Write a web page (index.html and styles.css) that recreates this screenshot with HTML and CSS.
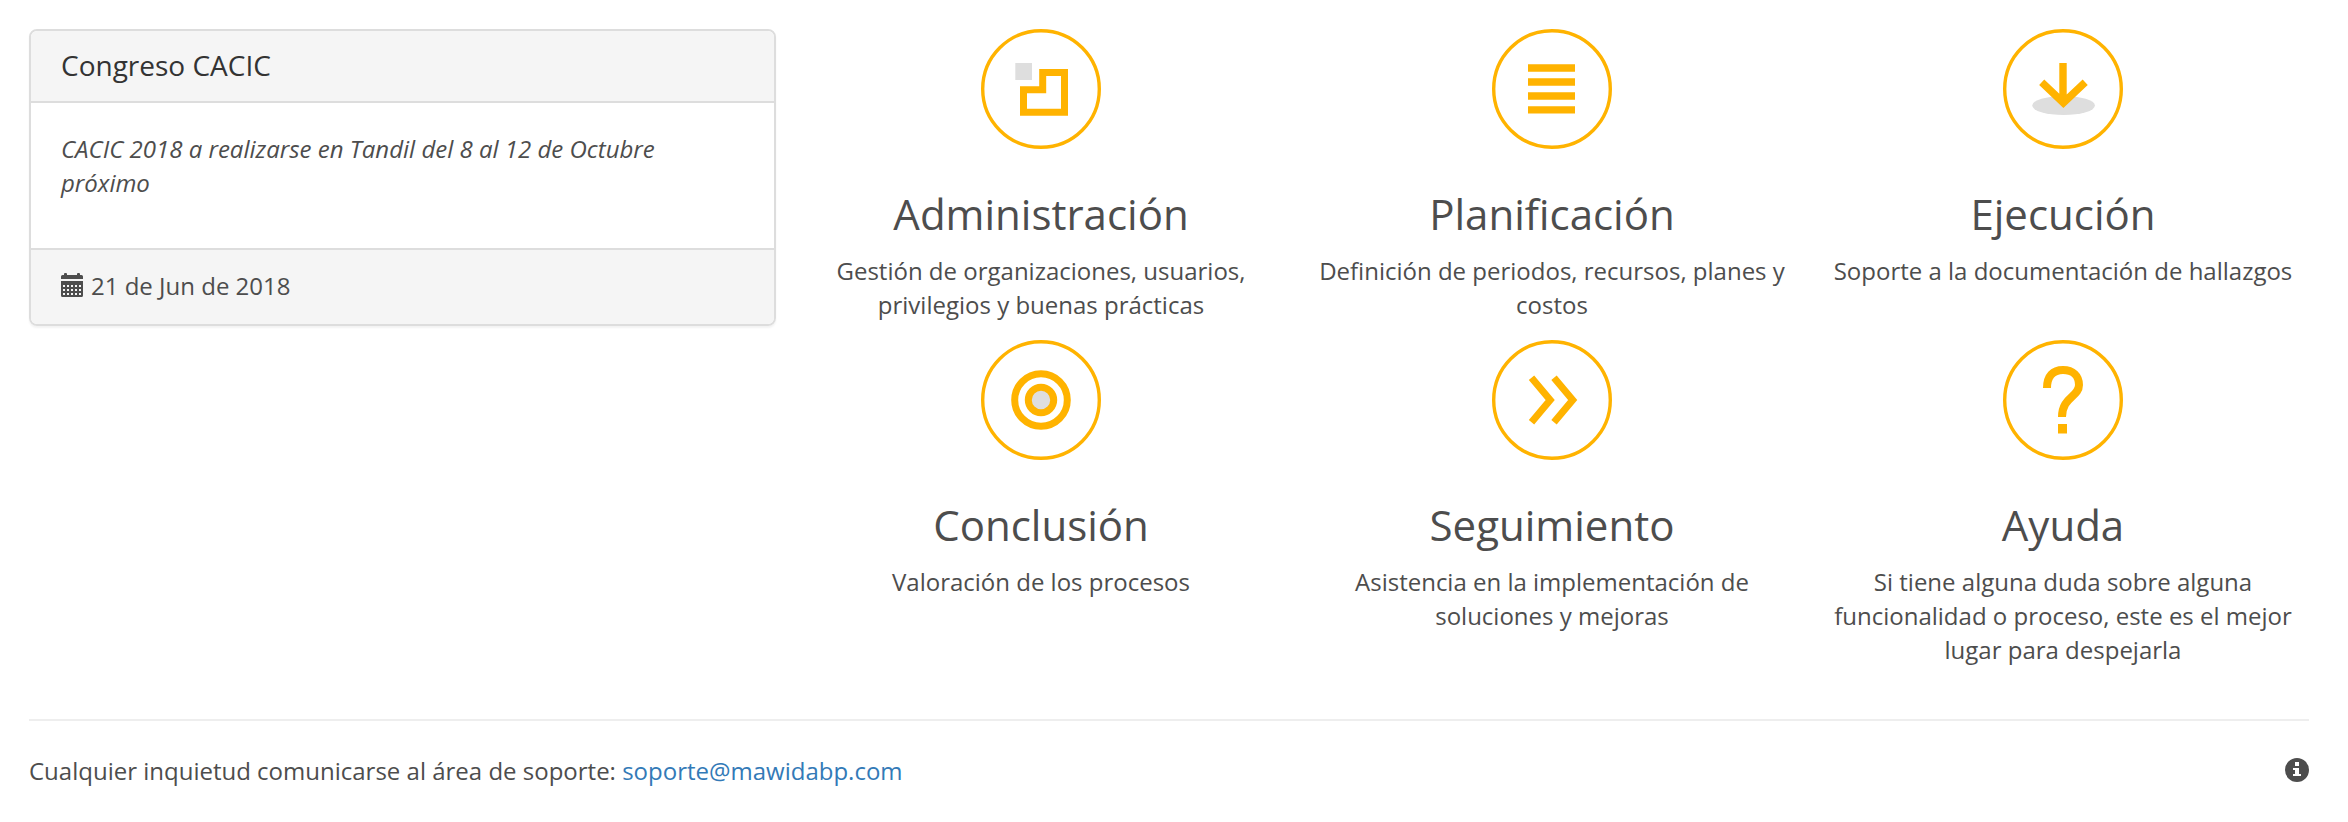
FILE: index.html
```html
<!DOCTYPE html>
<html lang="es">
<head>
<meta charset="utf-8">
<title>Inicio</title>
<link rel="stylesheet" href="styles.css">
</head>
<body>
<main class="content">
  <section class="panel">
    <h3 class="panel-heading">Congreso CACIC</h3>
    <div class="panel-body"><em>CACIC 2018 a realizarse en Tandil del 8 al 12 de Octubre próximo</em></div>
    <div class="panel-footer">
      <svg class="calendar" viewBox="0 0 22 24"><path fill="#4d4d4d" fill-rule="evenodd" d="M0 6V3.500Q0 2 1.500 2H3V1Q3 0 4 0H5Q6 0 6 1V2H16V1Q16 0 17 0H18Q19 0 19 1V2H20.500Q22 2 22 3.500V6ZM0 8H22V22.500Q22 24 20.500 24H1.500Q0 24 0 22.500ZM2 12v2h2v-2zM6 12v2h2v-2zM10 12v2h2v-2zM14 12v2h2v-2zM18 12v2h2v-2zM2 16v2h2v-2zM6 16v2h2v-2zM10 16v2h2v-2zM14 16v2h2v-2zM18 16v2h2v-2zM2 20v2h2v-2zM6 20v2h2v-2zM10 20v2h2v-2zM14 20v2h2v-2zM18 20v2h2v-2z"/></svg>
      <span>21 de Jun de 2018</span>
    </div>
  </section>
  <section class="features">
    <article class="feature">
      <svg class="badge" viewBox="0 0 120 120"><circle class="ring" cx="60" cy="60" r="58.300"/><path fill="#dedede" d="M34.300 34h16.700v17H34.300z"/><path class="line" stroke-width="7" d="M42.500 60.700H61.700V43.500H83.500V83.300H42.500z"/></svg>
      <h2>Administración</h2>
      <p>Gestión de organizaciones, usuarios, privilegios y buenas prácticas</p>
    </article>
    <article class="feature">
      <svg class="badge" viewBox="0 0 120 120"><circle class="ring" cx="60" cy="60" r="58.300"/><path fill="#ffb300" d="M36 35.200h47v7.600H36zM36 49.200h47v7.600H36zM36 63.200h47v7.600H36zM36 77.200h47v7.200H36z"/></svg>
      <h2>Planificación</h2>
      <p>Definición de periodos, recursos, planes y costos</p>
    </article>
    <article class="feature">
      <svg class="badge" viewBox="0 0 120 120"><circle class="ring" cx="60" cy="60" r="58.300"/><ellipse fill="#dedede" cx="60.600" cy="76.500" rx="31.300" ry="9.500"/><path class="line" stroke-width="7.400" d="M60 34V73M38.700 53.200 60.400 73.800 82.200 53.200"/></svg>
      <h2>Ejecución</h2>
      <p>Soporte a la documentación de hallazgos</p>
    </article>
    <article class="feature">
      <svg class="badge" viewBox="0 0 120 120"><circle class="ring" cx="60" cy="60" r="58.300"/><circle class="line" stroke-width="7" cx="60" cy="60" r="26.300"/><circle fill="#dedede" stroke="#ffb300" stroke-width="7" cx="60" cy="60" r="12.700"/></svg>
      <h2>Conclusión</h2>
      <p>Valoración de los procesos</p>
    </article>
    <article class="feature">
      <svg class="badge" viewBox="0 0 120 120"><circle class="ring" cx="60" cy="60" r="58.300"/><path class="line" stroke-width="7" d="M39.500 37.700 58.200 60 39.500 82.300M62 37.700 80.700 60 62 82.300"/></svg>
      <h2>Seguimiento</h2>
      <p>Asistencia en la implementación de soluciones y mejoras</p>
    </article>
    <article class="feature">
      <svg class="badge" viewBox="0 0 120 120"><circle class="ring" cx="60" cy="60" r="58.300"/><path class="line" stroke-width="8" d="M44 48C44 36 50 30 60 30C70 30 76 36 76 45C76 57 59 57 59 77"/><path fill="#ffb300" d="M55 84h9v9.500h-9z"/></svg>
      <h2>Ayuda</h2>
      <p>Si tiene alguna duda sobre alguna funcionalidad o proceso, este es el mejor lugar para despejarla</p>
    </article>
  </section>
</main>
<footer class="footer">
  <span>Cualquier inquietud comunicarse al área de soporte: <a href="#">soporte@mawidabp.com</a></span>
  <svg class="info" viewBox="0 0 24 24"><circle fill="#4d4d4d" cx="12" cy="12" r="12"/><path fill="#fff" d="M10 4h4v4h-4zM8 10h6v6h2v2H8v-2h2v-4H8z"/></svg>
</footer>
</body>
</html>
```
FILE: styles.css
```css
* { box-sizing: border-box; }
body {
  margin: 0;
  padding: 29px 39px 0 29px;
  background: #fff;
  color: #4d4d4d;
  font: 24px/34px "Open Sans", sans-serif;
}
h2, h3, p { margin: 0; font-weight: 400; }
.content {
  display: grid;
  grid-template-columns: 747px 1533px;
  column-gap: 9.5px;
  align-items: start;
  height: 690px;
}
.panel {
  border: 2px solid #ddd;
  border-radius: 8px;
  overflow: hidden;
  box-shadow: 0 2px 2px rgba(0, 0, 0, .05);
}
.panel-heading {
  height: 72px;
  padding: 19px 30px;
  background: #f5f5f5;
  border-bottom: 2px solid #ddd;
  color: #333;
  font-size: 28px;
  line-height: 31px;
}
.panel-body { height: 145px; padding: 29px 30px; }
.panel-footer {
  display: flex;
  gap: 8px;
  height: 76px;
  padding: 19px 30px;
  background: #f5f5f5;
  border-top: 2px solid #ddd;
}
.calendar { width: 22px; height: 24px; margin-top: 4px; }
.features {
  display: grid;
  grid-template-columns: repeat(3, 511px);
  grid-template-rows: 311px auto;
}
.feature { padding: 0 20px; text-align: center; }
.badge { display: block; width: 120px; height: 120px; margin: 0 auto; }
.ring { fill: none; stroke: #ffb300; stroke-width: 3.4; }
.line { fill: none; stroke: #ffb300; }
.feature h2 { margin: 42px 0 17px; font-size: 42px; line-height: 46px; }
.footer {
  display: flex;
  justify-content: space-between;
  padding-top: 33px;
  border-top: 2px solid #eee;
}
.footer a { color: #337ab7; text-decoration: none; }
.info { width: 24px; height: 24px; margin-top: 4px; }
```
